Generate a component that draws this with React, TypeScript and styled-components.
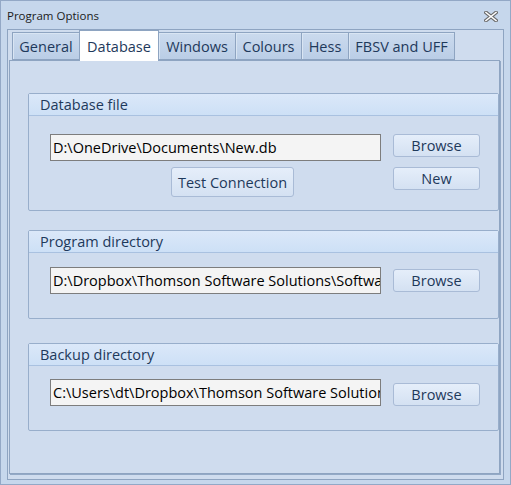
import styled, { createGlobalStyle } from "styled-components";

const GlobalStyle = createGlobalStyle`
  html, body {
    margin: 0;
    padding: 0;
    background: #c6d7ec;
  }
  body {
    font-family: "Open Sans", "Noto Sans", sans-serif;
  }
`;

const Window = styled.div`
  width: 511px;
  height: 485px;
  box-sizing: border-box;
  border: 1px solid #93a8c6;
  background: #c6d7ec;
  display: flex;
  flex-direction: column;
`;

const TitleBar = styled.div`
  height: 28px;
  flex: none;
  display: flex;
  align-items: center;
  justify-content: space-between;
  padding: 1px 12px 0 6px;
  box-sizing: border-box;
  font-size: 11.5px;
  color: #1b1b1b;
`;

const CloseButton = styled.div`
  width: 14px;
  height: 11px;
  display: flex;
  margin-top: 2px;
`;

const TabControl = styled.div`
  flex: 1;
  margin: 0 6px 4px 6px;
  border: 1px solid #8ea4c1;
  background: #cfdcee;
  display: flex;
  flex-direction: column;
`;

const TabStrip = styled.div`
  height: 30px;
  flex: none;
  display: flex;
  align-items: flex-end;
  padding-left: 4px;
  position: relative;
  z-index: 1;
`;

const Tab = styled.div<{ $active?: boolean; $w: number }>`
  box-sizing: border-box;
  width: ${({ $w }) => $w}px;
  height: ${({ $active }) => ($active ? 31 : 28)}px;
  margin-bottom: ${({ $active }) => ($active ? -1 : 0)}px;
  margin-right: -1px;
  border: 1px solid #8ea4c1;
  border-bottom: ${({ $active }) => ($active ? "none" : "1px solid #8ea4c1")};
  background: ${({ $active }) =>
    $active ? "#ffffff" : "linear-gradient(#cbdaee, #bacde6)"};
  box-shadow: ${({ $active }) =>
    $active ? "none" : "inset 1px 1px 0 #d9e5f3"};
  color: #1e395b;
  font-size: 14.5px;
  display: flex;
  align-items: center;
  justify-content: center;
  padding-top: ${({ $active }) => ($active ? 0 : 1)}px;
  position: relative;
  z-index: ${({ $active }) => ($active ? 2 : 1)};
`;

const Page = styled.div`
  flex: 1;
  margin: 0 3px 5px 1px;
  border: 1px solid #8ea4c1;
  box-shadow: 1px 1px 0 #93a9c6;
  background: #cfdcee;
  padding: 32px 0 0 18px;
  display: flex;
  flex-direction: column;
`;

const Group = styled.div<{ $gap: number }>`
  margin-top: ${({ $gap }) => $gap}px;
  border: 1px solid #98aecb;
  border-radius: 2px;
  display: flex;
  flex-direction: column;
`;

const GroupHeader = styled.div`
  height: 21px;
  border-bottom: 1px solid #a9c1e0;
  background: linear-gradient(#dbe8f9, #cde0f6);
  padding-left: 11px;
  display: flex;
  align-items: center;
  font-size: 14.5px;
  color: #1e395b;
`;

const GroupBody = styled.div<{ $top: number; $bottom: number }>`
  padding: ${({ $top }) => $top}px 0 ${({ $bottom }) => $bottom}px 21px;
  display: grid;
  grid-template-columns: 331px 87px;
  column-gap: 12px;
  row-gap: 6px;
`;

const PathField = styled.div`
  box-sizing: border-box;
  height: 27px;
  border: 1px solid #7d7d7d;
  background: #f4f4f4;
  color: #000;
  font-size: 14.5px;
  padding: 0 0 0 2px;
  display: flex;
  align-items: center;
  white-space: nowrap;
  overflow: hidden;
`;

const Button = styled.div<{ $w?: number; $h?: number; $align?: string; $indent?: number }>`
  box-sizing: border-box;
  width: ${({ $w }) => ($w ? `${$w}px` : "100%")};
  height: ${({ $h }) => $h ?? 23}px;
  align-self: ${({ $align }) => $align ?? "start"};
  margin-left: ${({ $indent }) => $indent ?? 0}px;
  border: 1px solid #a9bbd6;
  border-radius: 3px;
  background: linear-gradient(#e5eefa, #d4e1f2);
  color: #1e395b;
  font-size: 14.5px;
  display: flex;
  align-items: center;
  justify-content: center;
`;

const CloseIcon = () => (
  <svg width="14" height="11" viewBox="0 0 14 11">
    <path d="M2 1.5 L12 9.5 M12 1.5 L2 9.5" stroke="#6b6b6b" strokeWidth="3.6" strokeLinecap="square" />
    <path d="M2 1.5 L12 9.5 M12 1.5 L2 9.5" stroke="#ffffff" strokeWidth="1.6" strokeLinecap="square" />
  </svg>
);

const tabs = [
  { label: "General", w: 68 },
  { label: "Database", w: 80, active: true },
  { label: "Windows", w: 78 },
  { label: "Colours", w: 67 },
  { label: "Hess", w: 48 },
  { label: "FBSV and UFF", w: 107 },
];

export default function App() {
  return (
    <>
      <GlobalStyle />
      <Window>
        <TitleBar>
          <span>Program Options</span>
          <CloseButton>
            <CloseIcon />
          </CloseButton>
        </TitleBar>
        <TabControl>
          <TabStrip>
            {tabs.map((t) => (
              <Tab key={t.label} $w={t.w} $active={t.active}>
                {t.label}
              </Tab>
            ))}
          </TabStrip>
          <Page>
            <Group $gap={0}>
              <GroupHeader>Database file</GroupHeader>
              <GroupBody $top={18} $bottom={13}>
                <PathField>D:\OneDrive\Documents\New.db</PathField>
                <Button>Browse</Button>
                <Button $w={123} $h={30} $indent={121}>
                  Test Connection
                </Button>
                <Button>New</Button>
              </GroupBody>
            </Group>
            <Group $gap={19}>
              <GroupHeader>Program directory</GroupHeader>
              <GroupBody $top={14} $bottom={24}>
                <PathField>D:\Dropbox\Thomson Software Solutions\Software</PathField>
                <Button $align="center">Browse</Button>
              </GroupBody>
            </Group>
            <Group $gap={24}>
              <GroupHeader>Backup directory</GroupHeader>
              <GroupBody $top={13} $bottom={24}>
                <PathField>C:\Users\dt\Dropbox\Thomson Software Solutions</PathField>
                <Button $align="end">Browse</Button>
              </GroupBody>
            </Group>
          </Page>
        </TabControl>
      </Window>
    </>
  );
}
